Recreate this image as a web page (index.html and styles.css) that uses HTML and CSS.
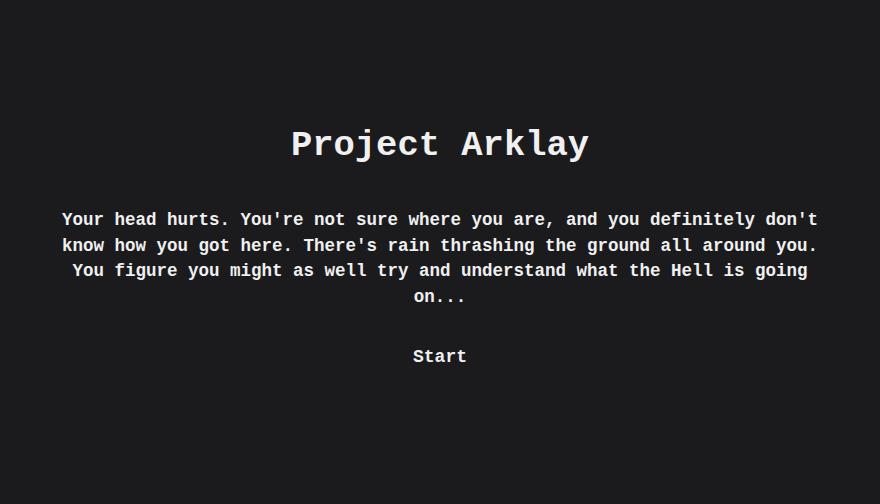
FILE: index.html
```html
<!DOCTYPE html>
<html>
<head>
<meta charset="utf-8">
<link rel="stylesheet" href="styles.css">
</head>
<body>
<main class="screen">
  <h1 class="title">Project Arklay</h1>
  <p class="story">Your head hurts. You're not sure where you are, and you definitely don't know how you got here. There's rain thrashing the ground all around you. You figure you might as well try and understand what the Hell is going on...</p>
  <button class="start">Start</button>
</main>
</body>
</html>
```
FILE: styles.css
```css
html, body {
  margin: 0;
  padding: 0;
  height: 100%;
  background: #1b1b1d;
}
body {
  color: #f0f0f0;
  font-family: "Liberation Mono", "DejaVu Sans Mono", monospace;
}
.screen {
  height: 504px;
  display: flex;
  flex-direction: column;
  align-items: center;
  justify-content: flex-start;
  padding-top: 123px;
  box-sizing: border-box;
}
.title {
  margin: 0;
  font-size: 35.5px;
  line-height: 46px;
  font-weight: bold;
  letter-spacing: 0;
}
.story {
  margin: 39px 0 0;
  width: 780px;
  text-align: center;
  font-size: 17.5px;
  line-height: 25.7px;
  font-weight: bold;
}
.start {
  margin-top: 34px;
  background: none;
  border: none;
  color: #f0f0f0;
  font-family: inherit;
  font-size: 18px;
  font-weight: bold;
  line-height: 24px;
  padding: 0;
  cursor: pointer;
}
```
